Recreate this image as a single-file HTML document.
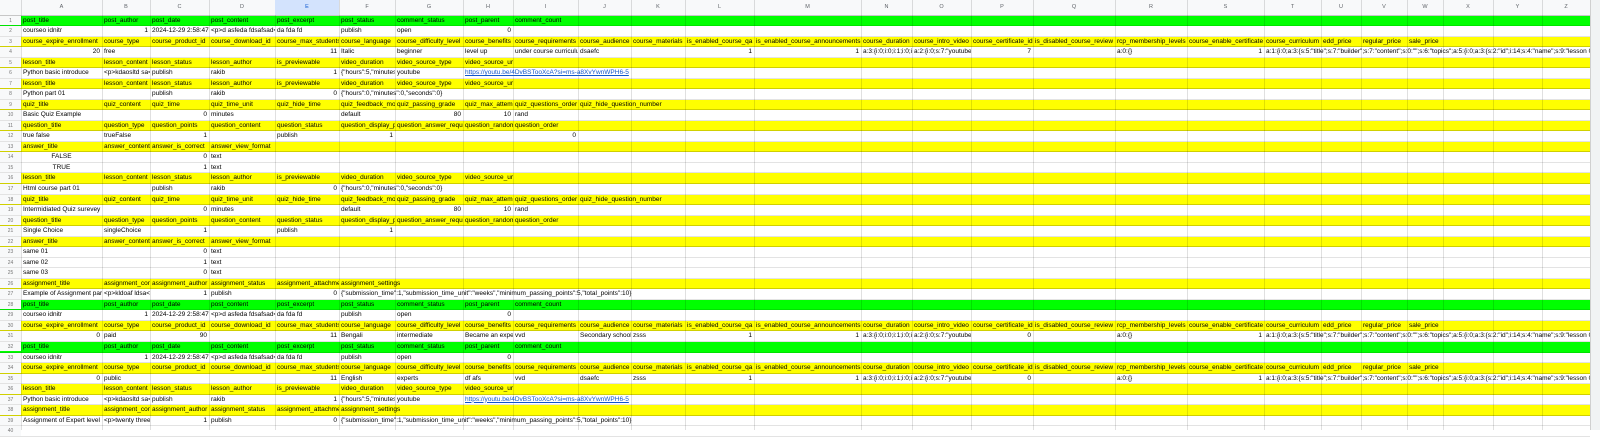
<!DOCTYPE html>
<html><head><meta charset="utf-8"><style>
*{margin:0;padding:0;box-sizing:border-box}
body{width:1600px;height:430px;overflow:hidden;background:#fff;font-family:"Liberation Sans",Arial,sans-serif;font-size:6.5px;color:#000;position:relative}
#hdr{position:absolute;left:0;top:0;width:1590px;height:15.5px;background:#f8f9fa;border-bottom:1px solid #c7c7c7}
#hdr span{position:absolute;top:0;height:15px;line-height:15px;text-align:center;color:#5f6368;font-size:5.5px;z-index:2}
#rows{position:absolute;left:0;top:15.5px;width:1590px}
.r{position:relative;height:10.54px;border-bottom:1px solid rgba(0,0,0,.11);background:#fff}
.y{background:#ffff00;border-bottom-color:rgba(120,120,0,.35)}
.g{background:#00ff00}
.r span{position:absolute;top:0;height:9.5px;line-height:10.8px;padding:0 2px;white-space:nowrap;overflow:hidden;z-index:2}
.r span.o{overflow:visible;width:auto!important}
.r span.n{text-align:right}
.r span.m{text-align:center}
.r span.rn{left:0;width:21px;background:#f8f9fa;color:#777;font-size:5px;text-align:center;z-index:3}
.A{left:21px;width:81px}.B{left:102px;width:48px}.C{left:150px;width:59px}.D{left:209px;width:66px}.E{left:275px;width:64px}.F{left:339px;width:56px}.G{left:395px;width:68px}.H{left:463px;width:50px}.I{left:513px;width:65px}.J{left:578px;width:53px}.K{left:631px;width:54px}.L{left:685px;width:69px}.M{left:754px;width:107px}.N{left:861px;width:51px}.O{left:912px;width:59px}.P{left:971px;width:62px}.Q{left:1033px;width:82px}.R{left:1115px;width:72px}.S{left:1187px;width:77px}.T{left:1264px;width:57px}.U{left:1321px;width:40px}.V{left:1361px;width:46px}.W{left:1407px;width:36px}.X{left:1443px;width:50px}.Y{left:1493px;width:49px}.Z{left:1542px;width:48px}
.r span.TT{width:326px}
.vl{position:absolute;top:0;width:1px;height:430px;background:rgba(0,0,0,.12);z-index:1}
a{color:#1155cc;text-decoration:underline}
#side{position:absolute;left:1590px;top:0;width:10px;height:430px;background:#f1f3f4;border-left:1px solid #d0d0d0}
</style></head><body>
<div id="hdr">
<span style="left:0;width:21px"></span>
<span class="A">A</span><span class="B">B</span><span class="C">C</span><span class="D">D</span><span class="E" style="background:#d3e3fd;color:#0b57d0">E</span><span class="F">F</span><span class="G">G</span><span class="H">H</span><span class="I">I</span><span class="J">J</span><span class="K">K</span><span class="L">L</span><span class="M">M</span><span class="N">N</span><span class="O">O</span><span class="P">P</span><span class="Q">Q</span><span class="R">R</span><span class="S">S</span><span class="T">T</span><span class="U">U</span><span class="V">V</span><span class="W">W</span><span class="X">X</span><span class="Y">Y</span><span class="Z">Z</span>
</div>
<div id="rows">
<div class="r g"><span class="rn">1</span><span class="A">post_title</span><span class="B">post_author</span><span class="C">post_date</span><span class="D">post_content</span><span class="E">post_excerpt</span><span class="F">post_status</span><span class="G">comment_status</span><span class="H">post_parent</span><span class="I">comment_count</span></div>
<div class="r"><span class="rn">2</span><span class="A">courseo idnitr</span><span class="B n">1</span><span class="C">2024-12-29 2:58:47</span><span class="D">&lt;p&gt;d asfeda fdsafsad&lt;</span><span class="E">da fda fd</span><span class="F">publish</span><span class="G">open</span><span class="H n">0</span></div>
<div class="r y"><span class="rn">3</span><span class="A">course_expire_enrollment</span><span class="B">course_type</span><span class="C">course_product_id</span><span class="D">course_download_id</span><span class="E">course_max_students</span><span class="F">course_language</span><span class="G">course_difficulty_level</span><span class="H">course_benefits</span><span class="I">course_requirements</span><span class="J">course_audience</span><span class="K">course_materials</span><span class="L">is_enabled_course_qa</span><span class="M">is_enabled_course_announcements</span><span class="N">course_duration</span><span class="O">course_intro_video</span><span class="P">course_certificate_id</span><span class="Q">is_disabled_course_review</span><span class="R">rcp_membership_levels</span><span class="S">course_enable_certificate</span><span class="T">course_curriculum</span><span class="U">edd_price</span><span class="V">regular_price</span><span class="W">sale_price</span></div>
<div class="r"><span class="rn">4</span><span class="A n">20</span><span class="B">free</span><span class="E n">11</span><span class="F">Italic</span><span class="G">beginner</span><span class="H">level up</span><span class="I">under course curriculum</span><span class="J">dsaefc</span><span class="L n">1</span><span class="M n">1</span><span class="N">a:3:{i:0;i:0;i:1;i:0;i:2;i:0;}</span><span class="O">a:2:{i:0;s:7:"youtube";}</span><span class="P n">7</span><span class="R">a:0:{}</span><span class="S n">1</span><span class="T TT">a:1:{i:0;a:3:{s:5:"title";s:7:"builder";s:7:"content";s:0:"";s:6:"topics";a:5:{i:0;a:3:{s:2:"id";i:14;s:4:"name";s:9:"lesson 01";</span></div>
<div class="r y"><span class="rn">5</span><span class="A">lesson_title</span><span class="B">lesson_content</span><span class="C">lesson_status</span><span class="D">lesson_author</span><span class="E">is_previewable</span><span class="F">video_duration</span><span class="G">video_source_type</span><span class="H">video_source_url</span></div>
<div class="r"><span class="rn">6</span><span class="A">Python basic introduce</span><span class="B">&lt;p&gt;kdaosltd sa&lt;</span><span class="C">publish</span><span class="D">rakib</span><span class="E n">1</span><span class="F">{"hours":5,"minutes":0}</span><span class="G">youtube</span><span class="H o"><a>https://youtu.be/4DvBSTooXcA?si=ms-a8XvYwnWPH6-5</a></span></div>
<div class="r y"><span class="rn">7</span><span class="A">lesson_title</span><span class="B">lesson_content</span><span class="C">lesson_status</span><span class="D">lesson_author</span><span class="E">is_previewable</span><span class="F">video_duration</span><span class="G">video_source_type</span><span class="H">video_source_url</span></div>
<div class="r"><span class="rn">8</span><span class="A">Python part 01</span><span class="C">publish</span><span class="D">rakib</span><span class="E n">0</span><span class="F o">{"hours":0,"minutes":0,"seconds":0}</span></div>
<div class="r y"><span class="rn">9</span><span class="A">quiz_title</span><span class="B">quiz_content</span><span class="C">quiz_time</span><span class="D">quiz_time_unit</span><span class="E">quiz_hide_time</span><span class="F">quiz_feedback_mode</span><span class="G">quiz_passing_grade</span><span class="H">quiz_max_attempts</span><span class="I">quiz_questions_order</span><span class="J o">quiz_hide_question_number</span></div>
<div class="r"><span class="rn">10</span><span class="A">Basic Quiz Example</span><span class="C n">0</span><span class="D">minutes</span><span class="F">default</span><span class="G n">80</span><span class="H n">10</span><span class="I">rand</span></div>
<div class="r y"><span class="rn">11</span><span class="A">question_title</span><span class="B">question_type</span><span class="C">question_points</span><span class="D">question_content</span><span class="E">question_status</span><span class="F">question_display_points</span><span class="G">question_answer_required</span><span class="H">question_randomize</span><span class="I">question_order</span></div>
<div class="r"><span class="rn">12</span><span class="A">true false</span><span class="B">trueFalse</span><span class="C n">1</span><span class="E">publish</span><span class="F n">1</span><span class="I n">0</span></div>
<div class="r y"><span class="rn">13</span><span class="A">answer_title</span><span class="B">answer_content</span><span class="C">answer_is_correct</span><span class="D">answer_view_format</span></div>
<div class="r"><span class="rn">14</span><span class="A m">FALSE</span><span class="C n">0</span><span class="D">text</span></div>
<div class="r"><span class="rn">15</span><span class="A m">TRUE</span><span class="C n">1</span><span class="D">text</span></div>
<div class="r y"><span class="rn">16</span><span class="A">lesson_title</span><span class="B">lesson_content</span><span class="C">lesson_status</span><span class="D">lesson_author</span><span class="E">is_previewable</span><span class="F">video_duration</span><span class="G">video_source_type</span><span class="H">video_source_url</span></div>
<div class="r"><span class="rn">17</span><span class="A">Html course part 01</span><span class="C">publish</span><span class="D">rakib</span><span class="E n">0</span><span class="F o">{"hours":0,"minutes":0,"seconds":0}</span></div>
<div class="r y"><span class="rn">18</span><span class="A">quiz_title</span><span class="B">quiz_content</span><span class="C">quiz_time</span><span class="D">quiz_time_unit</span><span class="E">quiz_hide_time</span><span class="F">quiz_feedback_mode</span><span class="G">quiz_passing_grade</span><span class="H">quiz_max_attempts</span><span class="I">quiz_questions_order</span><span class="J o">quiz_hide_question_number</span></div>
<div class="r"><span class="rn">19</span><span class="A">Intermidiated Quiz surevey</span><span class="C n">0</span><span class="D">minutes</span><span class="F">default</span><span class="G n">80</span><span class="H n">10</span><span class="I">rand</span></div>
<div class="r y"><span class="rn">20</span><span class="A">question_title</span><span class="B">question_type</span><span class="C">question_points</span><span class="D">question_content</span><span class="E">question_status</span><span class="F">question_display_points</span><span class="G">question_answer_required</span><span class="H">question_randomize</span><span class="I">question_order</span></div>
<div class="r"><span class="rn">21</span><span class="A">Single Choice</span><span class="B">singleChoice</span><span class="C n">1</span><span class="E">publish</span><span class="F n">1</span></div>
<div class="r y"><span class="rn">22</span><span class="A">answer_title</span><span class="B">answer_content</span><span class="C">answer_is_correct</span><span class="D">answer_view_format</span></div>
<div class="r"><span class="rn">23</span><span class="A">same 01</span><span class="C n">0</span><span class="D">text</span></div>
<div class="r"><span class="rn">24</span><span class="A">same 02</span><span class="C n">1</span><span class="D">text</span></div>
<div class="r"><span class="rn">25</span><span class="A">same 03</span><span class="C n">0</span><span class="D">text</span></div>
<div class="r y"><span class="rn">26</span><span class="A">assignment_title</span><span class="B">assignment_content</span><span class="C">assignment_author</span><span class="D">assignment_status</span><span class="E">assignment_attachments</span><span class="F o">assignment_settings</span></div>
<div class="r"><span class="rn">27</span><span class="A">Example of Assignment part</span><span class="B">&lt;p&gt;kldoaf ldsa&lt;</span><span class="C n">1</span><span class="D">publish</span><span class="E n">0</span><span class="F o">{"submission_time":1,"submission_time_unit":"weeks","minimum_passing_points":5,"total_points":10}</span></div>
<div class="r g"><span class="rn">28</span><span class="A">post_title</span><span class="B">post_author</span><span class="C">post_date</span><span class="D">post_content</span><span class="E">post_excerpt</span><span class="F">post_status</span><span class="G">comment_status</span><span class="H">post_parent</span><span class="I">comment_count</span></div>
<div class="r"><span class="rn">29</span><span class="A">courseo idnitr</span><span class="B n">1</span><span class="C">2024-12-29 2:58:47</span><span class="D">&lt;p&gt;d asfeda fdsafsad&lt;</span><span class="E">da fda fd</span><span class="F">publish</span><span class="G">open</span><span class="H n">0</span></div>
<div class="r y"><span class="rn">30</span><span class="A">course_expire_enrollment</span><span class="B">course_type</span><span class="C">course_product_id</span><span class="D">course_download_id</span><span class="E">course_max_students</span><span class="F">course_language</span><span class="G">course_difficulty_level</span><span class="H">course_benefits</span><span class="I">course_requirements</span><span class="J">course_audience</span><span class="K">course_materials</span><span class="L">is_enabled_course_qa</span><span class="M">is_enabled_course_announcements</span><span class="N">course_duration</span><span class="O">course_intro_video</span><span class="P">course_certificate_id</span><span class="Q">is_disabled_course_review</span><span class="R">rcp_membership_levels</span><span class="S">course_enable_certificate</span><span class="T">course_curriculum</span><span class="U">edd_price</span><span class="V">regular_price</span><span class="W">sale_price</span></div>
<div class="r"><span class="rn">31</span><span class="A n">0</span><span class="B">paid</span><span class="C n">90</span><span class="E n">11</span><span class="F">Bengali</span><span class="G">intermediate</span><span class="H">Became an expert</span><span class="I">vvd</span><span class="J">Secondary school</span><span class="K">zsss</span><span class="L n">1</span><span class="M n">1</span><span class="N">a:3:{i:0;i:0;i:1;i:0;i:2;i:0;}</span><span class="O">a:2:{i:0;s:7:"youtube";}</span><span class="P n">0</span><span class="R">a:0:{}</span><span class="S n">1</span><span class="T TT">a:1:{i:0;a:3:{s:5:"title";s:7:"builder";s:7:"content";s:0:"";s:6:"topics";a:5:{i:0;a:3:{s:2:"id";i:14;s:4:"name";s:9:"lesson 01";</span></div>
<div class="r g"><span class="rn">32</span><span class="A">post_title</span><span class="B">post_author</span><span class="C">post_date</span><span class="D">post_content</span><span class="E">post_excerpt</span><span class="F">post_status</span><span class="G">comment_status</span><span class="H">post_parent</span><span class="I">comment_count</span></div>
<div class="r"><span class="rn">33</span><span class="A">courseo idnitr</span><span class="B n">1</span><span class="C">2024-12-29 2:58:47</span><span class="D">&lt;p&gt;d asfeda fdsafsad&lt;</span><span class="E">da fda fd</span><span class="F">publish</span><span class="G">open</span><span class="H n">0</span></div>
<div class="r y"><span class="rn">34</span><span class="A">course_expire_enrollment</span><span class="B">course_type</span><span class="C">course_product_id</span><span class="D">course_download_id</span><span class="E">course_max_students</span><span class="F">course_language</span><span class="G">course_difficulty_level</span><span class="H">course_benefits</span><span class="I">course_requirements</span><span class="J">course_audience</span><span class="K">course_materials</span><span class="L">is_enabled_course_qa</span><span class="M">is_enabled_course_announcements</span><span class="N">course_duration</span><span class="O">course_intro_video</span><span class="P">course_certificate_id</span><span class="Q">is_disabled_course_review</span><span class="R">rcp_membership_levels</span><span class="S">course_enable_certificate</span><span class="T">course_curriculum</span><span class="U">edd_price</span><span class="V">regular_price</span><span class="W">sale_price</span></div>
<div class="r"><span class="rn">35</span><span class="A n">0</span><span class="B">public</span><span class="E n">11</span><span class="F">English</span><span class="G">experts</span><span class="H">df afs</span><span class="I">vvd</span><span class="J">dsaefc</span><span class="K">zsss</span><span class="L n">1</span><span class="M n">1</span><span class="N">a:3:{i:0;i:0;i:1;i:0;i:2;i:0;}</span><span class="O">a:2:{i:0;s:7:"youtube";}</span><span class="P n">0</span><span class="R">a:0:{}</span><span class="S n">1</span><span class="T TT">a:1:{i:0;a:3:{s:5:"title";s:7:"builder";s:7:"content";s:0:"";s:6:"topics";a:5:{i:0;a:3:{s:2:"id";i:14;s:4:"name";s:9:"lesson 01";</span></div>
<div class="r y"><span class="rn">36</span><span class="A">lesson_title</span><span class="B">lesson_content</span><span class="C">lesson_status</span><span class="D">lesson_author</span><span class="E">is_previewable</span><span class="F">video_duration</span><span class="G">video_source_type</span><span class="H">video_source_url</span></div>
<div class="r"><span class="rn">37</span><span class="A">Python basic introduce</span><span class="B">&lt;p&gt;kdaosltd sa&lt;</span><span class="C">publish</span><span class="D">rakib</span><span class="E n">1</span><span class="F">{"hours":5,"minutes":0}</span><span class="G">youtube</span><span class="H o"><a>https://youtu.be/4DvBSTooXcA?si=ms-a8XvYwnWPH6-5</a></span></div>
<div class="r y"><span class="rn">38</span><span class="A">assignment_title</span><span class="B">assignment_content</span><span class="C">assignment_author</span><span class="D">assignment_status</span><span class="E">assignment_attachments</span><span class="F o">assignment_settings</span></div>
<div class="r"><span class="rn">39</span><span class="A">Assignment of Expert level</span><span class="B">&lt;p&gt;twenty three</span><span class="C n">1</span><span class="D">publish</span><span class="E n">0</span><span class="F o">{"submission_time":1,"submission_time_unit":"weeks","minimum_passing_points":5,"total_points":10}</span></div>
<div class="r"><span class="rn">40</span></div>
</div>
<div class="vl" style="left:21px"></div><div class="vl" style="left:102px"></div><div class="vl" style="left:150px"></div><div class="vl" style="left:209px"></div><div class="vl" style="left:275px"></div><div class="vl" style="left:339px"></div><div class="vl" style="left:395px"></div><div class="vl" style="left:463px"></div><div class="vl" style="left:513px"></div><div class="vl" style="left:578px"></div><div class="vl" style="left:631px"></div><div class="vl" style="left:685px"></div><div class="vl" style="left:754px"></div><div class="vl" style="left:861px"></div><div class="vl" style="left:912px"></div><div class="vl" style="left:971px"></div><div class="vl" style="left:1033px"></div><div class="vl" style="left:1115px"></div><div class="vl" style="left:1187px"></div><div class="vl" style="left:1264px"></div><div class="vl" style="left:1321px"></div><div class="vl" style="left:1361px"></div><div class="vl" style="left:1407px"></div><div class="vl" style="left:1443px"></div><div class="vl" style="left:1493px"></div><div class="vl" style="left:1542px"></div>
<div id="side"></div>
</body></html>
